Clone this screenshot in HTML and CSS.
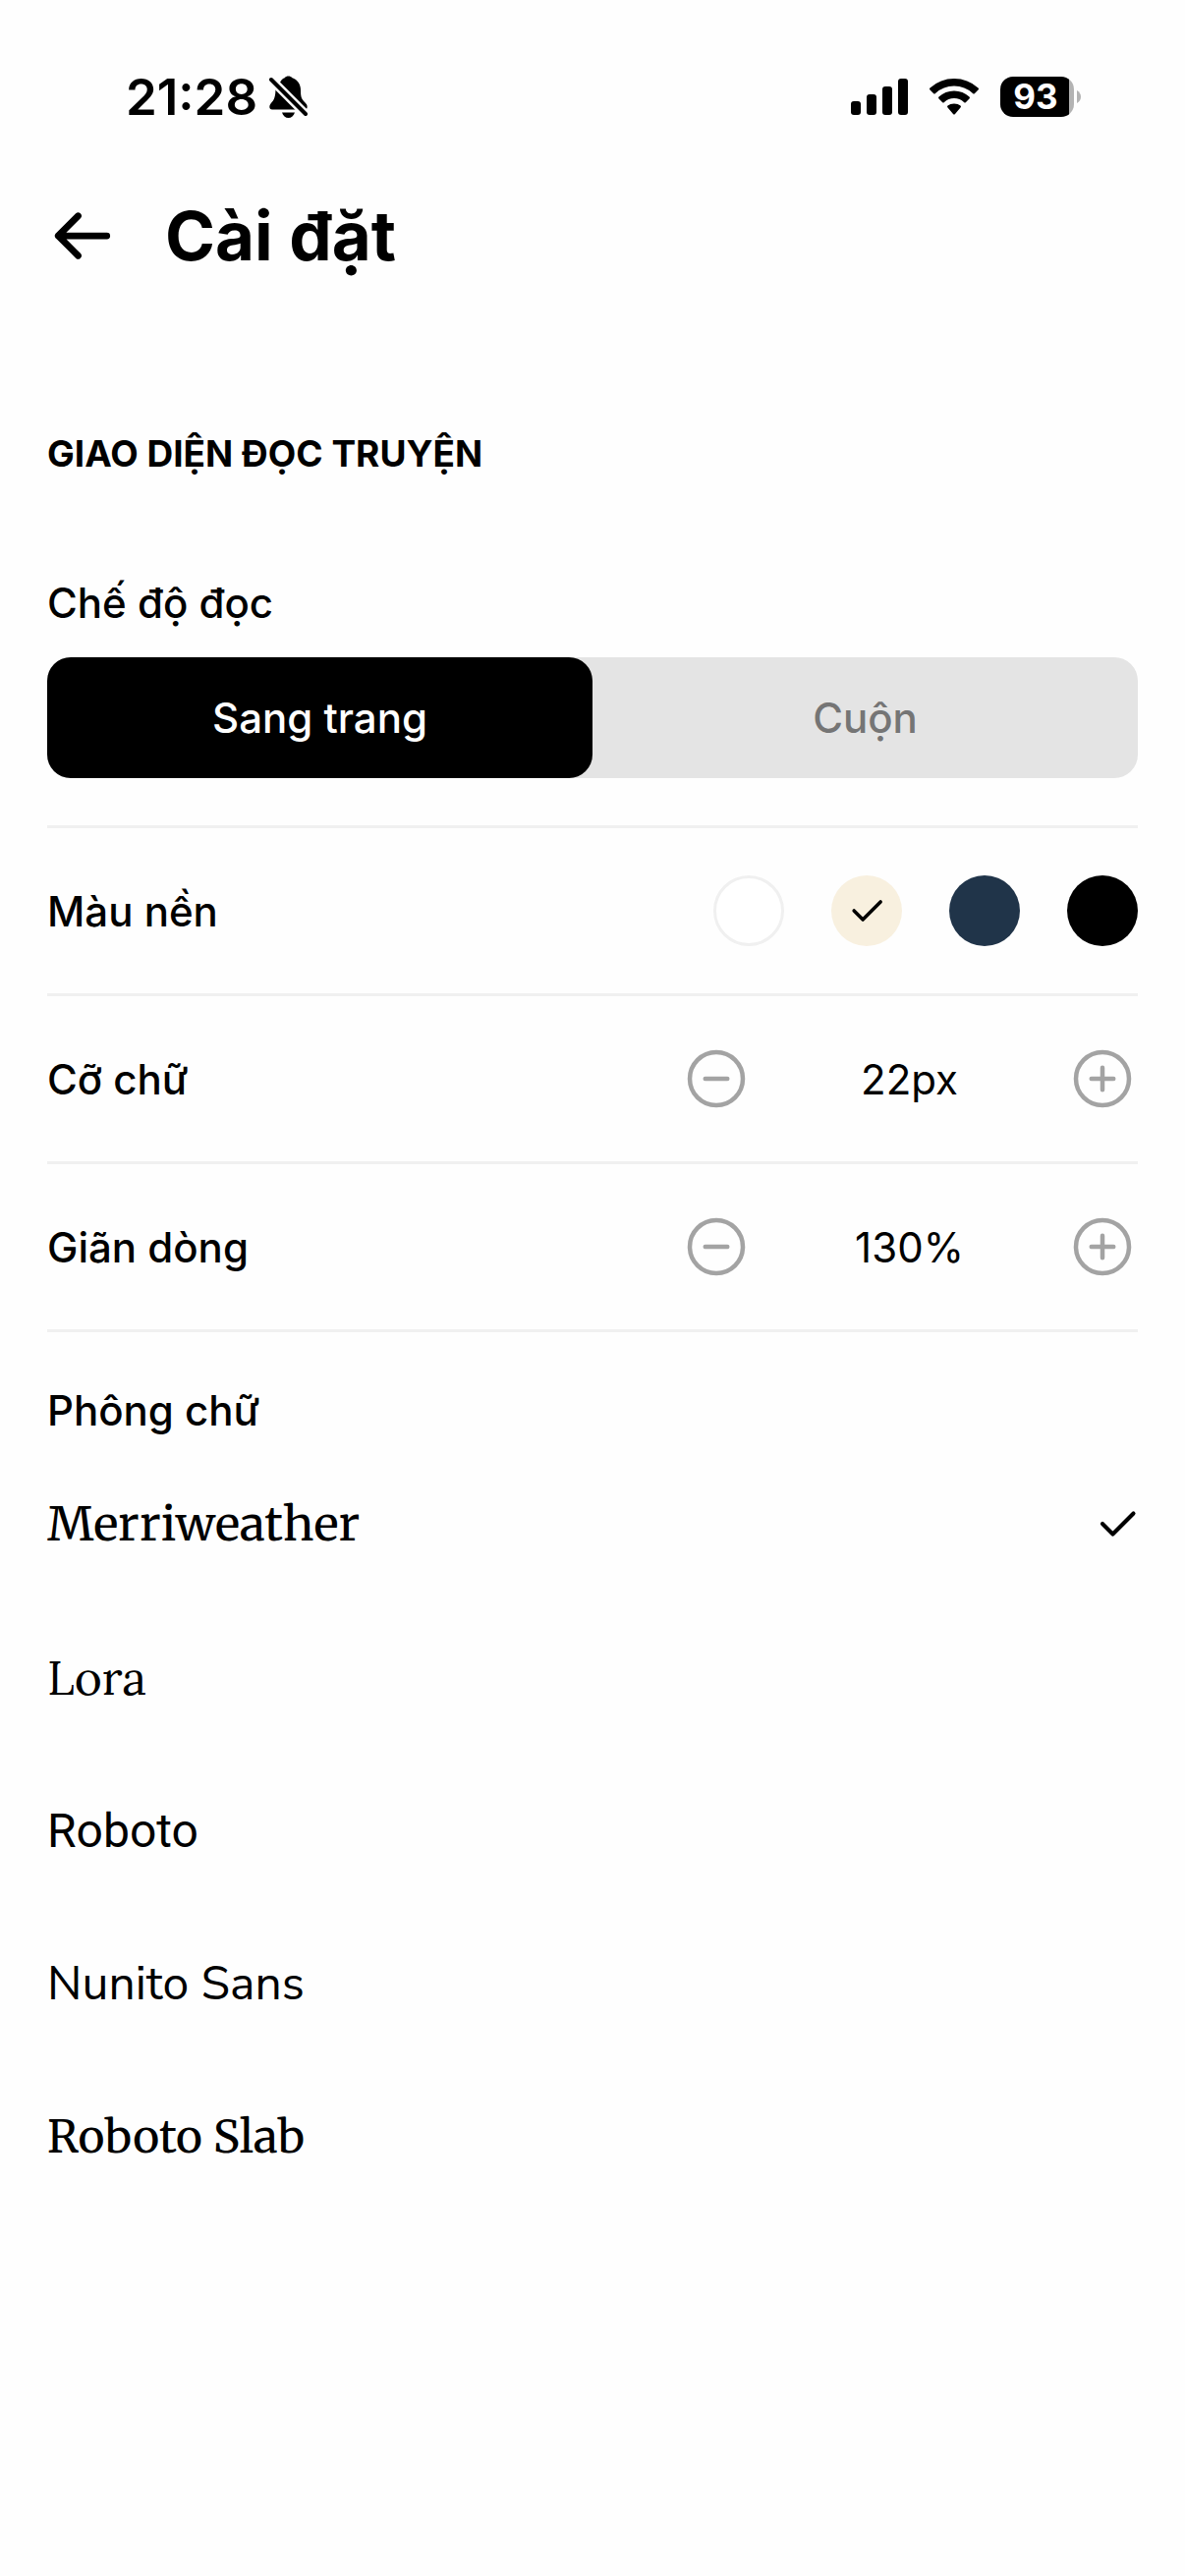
FILE: index.html
```
<!DOCTYPE html>
<html lang="vi">
<head>
    <meta charset="UTF-8">
    <meta name="viewport" content="width=device-width, initial-scale=1.0">
    <title>Cài đặt</title>
    <link rel="stylesheet" href="styles.css">
</head>
<body>
    <div class="status-bar">
        <div class="status-left">
            <span class="time">21:28</span>
            <svg class="bell" viewBox="0 0 39 43" aria-hidden="true">
                <path d="M10 9C12 4 14 3 16 2C17 0 22 0 23 2C29 4 32 9 32 15C32 22 33 24 37 28C39 30 39 32 38 34L34 32Z"/>
                <path d="M6.500 12L28 34.500H3C0 34.500 -0.500 31 1.500 28.500C5 24.500 6.500 22 6.500 12Z"/>
                <path d="M13 37.500H26C25 41 22.500 43 19.500 43C16.500 43 14 41 13 37.500Z"/>
                <path class="bell-gap" d="M1.500 3.500L37.500 39.500"/>
                <path class="bell-slash" d="M2 4L37 39"/>
            </svg>
        </div>
        <div class="status-right">
            <svg class="signal" viewBox="0 0 58 38" aria-hidden="true">
                <rect x="0" y="24" width="10" height="14" rx="3"/>
                <rect x="16" y="17" width="10" height="21" rx="3"/>
                <rect x="32" y="9" width="10" height="29" rx="3"/>
                <rect x="48" y="1" width="10" height="37" rx="3"/>
            </svg>
            <svg class="wifi" viewBox="0 0 50 38" aria-hidden="true">
                <path d="M0.500 10.500Q11 1 25 1Q39 1 49.500 10.500Q50.500 11.500 49.500 12.500L46 16Q45 17 44 16Q36 8.500 25 8.500Q14 8.500 6 16Q5 17 4 16L0.500 12.500Q-0.500 11.500 0.500 10.500Z"/>
                <path d="M9.500 19.500Q16 13.500 25 13.500Q34 13.500 40.500 19.500Q41.500 20.500 40.500 21.500L37 25Q36 26 35 25Q31 21 25 21Q19 21 15 25Q14 26 13 25L9.500 21.500Q8.500 20.500 9.500 19.500Z"/>
                <path d="M18.500 28.500Q21 26.500 25 26.500Q29 26.500 31.500 28.500Q32.500 29.500 31.500 30.500L26 37Q25 38 24 37L18.500 30.500Q17.500 29.500 18.500 28.500Z"/>
            </svg>
            <div class="battery">
                <span class="battery-level">93</span>
                <svg class="battery-nub" viewBox="0 0 4 13" aria-hidden="true">
                    <path d="M0 0Q4 2.500 4 6.500Q4 10.500 0 13Z"/>
                </svg>
            </div>
        </div>
    </div>

    <header class="header">
        <button class="icon-button" type="button" aria-label="Quay lại">
            <svg class="icon back" viewBox="0 0 256 256" aria-hidden="true">
                <path d="M216 128H40M112 56L40 128L112 200"/>
            </svg>
        </button>
        <h1>Cài đặt</h1>
    </header>

    <main class="content">
        <h2>GIAO DIỆN ĐỌC TRUYỆN</h2>

        <section class="mode">
            <h3 id="modeLabel">Chế độ đọc</h3>
            <div class="segments" role="radiogroup" aria-labelledby="modeLabel">
                <label class="segment"><input type="radio" name="mode" checked>Sang trang</label>
                <label class="segment"><input type="radio" name="mode">Cuộn</label>
            </div>
        </section>

        <section class="row">
            <h3 id="colorLabel">Màu nền</h3>
            <div class="swatches" role="radiogroup" aria-labelledby="colorLabel">
                <label class="swatch white">
                    <input type="radio" name="color" aria-label="Trắng">
                    <svg class="icon check" viewBox="16 16 224 224" aria-hidden="true"><path d="M216 72L104 184L48 128"/></svg>
                </label>
                <label class="swatch cream">
                    <input type="radio" name="color" aria-label="Kem" checked>
                    <svg class="icon check" viewBox="16 16 224 224" aria-hidden="true"><path d="M216 72L104 184L48 128"/></svg>
                </label>
                <label class="swatch navy">
                    <input type="radio" name="color" aria-label="Xanh đậm">
                    <svg class="icon check" viewBox="16 16 224 224" aria-hidden="true"><path d="M216 72L104 184L48 128"/></svg>
                </label>
                <label class="swatch black">
                    <input type="radio" name="color" aria-label="Đen">
                    <svg class="icon check" viewBox="16 16 224 224" aria-hidden="true"><path d="M216 72L104 184L48 128"/></svg>
                </label>
            </div>
        </section>

        <section class="row">
            <h3>Cỡ chữ</h3>
            <div class="stepper" data-step="1" data-unit="px">
                <button class="icon-button minus" type="button" aria-label="Giảm cỡ chữ">
                    <svg class="icon" viewBox="0 0 256 256" aria-hidden="true"><circle cx="128" cy="128" r="96"/><path d="M88 128H168"/></svg>
                </button>
                <output>22px</output>
                <button class="icon-button plus" type="button" aria-label="Tăng cỡ chữ">
                    <svg class="icon" viewBox="0 0 256 256" aria-hidden="true"><circle cx="128" cy="128" r="96"/><path d="M88 128H168M128 88V168"/></svg>
                </button>
            </div>
        </section>

        <section class="row">
            <h3>Giãn dòng</h3>
            <div class="stepper" data-step="10" data-unit="%">
                <button class="icon-button minus" type="button" aria-label="Giảm giãn dòng">
                    <svg class="icon" viewBox="0 0 256 256" aria-hidden="true"><circle cx="128" cy="128" r="96"/><path d="M88 128H168"/></svg>
                </button>
                <output>130%</output>
                <button class="icon-button plus" type="button" aria-label="Tăng giãn dòng">
                    <svg class="icon" viewBox="0 0 256 256" aria-hidden="true"><circle cx="128" cy="128" r="96"/><path d="M88 128H168M128 88V168"/></svg>
                </button>
            </div>
        </section>

        <section class="fonts">
            <h3 id="fontLabel">Phông chữ</h3>
            <div class="font-list" role="radiogroup" aria-labelledby="fontLabel">
                <label class="font merriweather">
                    <input type="radio" name="font" checked>Merriweather
                    <svg class="icon check" viewBox="16 16 224 224" aria-hidden="true"><path d="M216 72L104 184L48 128"/></svg>
                </label>
                <label class="font lora">
                    <input type="radio" name="font">Lora
                    <svg class="icon check" viewBox="16 16 224 224" aria-hidden="true"><path d="M216 72L104 184L48 128"/></svg>
                </label>
                <label class="font roboto">
                    <input type="radio" name="font">Roboto
                    <svg class="icon check" viewBox="16 16 224 224" aria-hidden="true"><path d="M216 72L104 184L48 128"/></svg>
                </label>
                <label class="font nunito">
                    <input type="radio" name="font">Nunito Sans
                    <svg class="icon check" viewBox="16 16 224 224" aria-hidden="true"><path d="M216 72L104 184L48 128"/></svg>
                </label>
                <label class="font roboto-slab">
                    <input type="radio" name="font">Roboto Slab
                    <svg class="icon check" viewBox="16 16 224 224" aria-hidden="true"><path d="M216 72L104 184L48 128"/></svg>
                </label>
            </div>
        </section>
    </main>

    <script>
        document.querySelectorAll('.stepper').forEach(function(stepper) {
            const output = stepper.querySelector('output');
            const step = Number(stepper.dataset.step);

            function change(delta) {
                output.textContent = parseInt(output.textContent, 10) + delta + stepper.dataset.unit;
            }
            stepper.querySelector('.minus').addEventListener('click', function() {
                change(-step);
            });
            stepper.querySelector('.plus').addEventListener('click', function() {
                change(step);
            });
        });
    </script>
</body>
</html>
```
FILE: styles.css
```
* {
    box-sizing: border-box;
}
body {
    margin: 0;
    font-family: Inter, "Liberation Sans", sans-serif;
    font-size: 42px;
    line-height: 63px;
    color: #000;
    background: #fefefe;
}
h1, h2, h3 {
    margin: 0;
}
h1 {
    font-size: 69px;
    line-height: 108px;
    font-weight: 700;
}
h2 {
    font-size: 37px;
    line-height: 48px;
    font-weight: 700;
}
h3 {
    font-size: 42px;
    font-weight: 500;
}

/* status bar */
.status-bar {
    display: flex;
    justify-content: space-between;
    align-items: center;
    height: 186px;
    padding: 10px 106px 0 128px;
}
.status-left {
    display: flex;
    align-items: center;
    gap: 12px;
}
.time {
    font-size: 51px;
    font-weight: 600;
}
.bell {
    width: 39px;
    height: 43px;
}
.bell-gap {
    stroke: #fefefe;
    stroke-width: 9;
}
.bell-slash {
    stroke: #000;
    stroke-width: 4;
    stroke-linecap: round;
}
.status-right {
    display: flex;
    align-items: center;
    gap: 22px;
}
.signal {
    width: 58px;
    height: 38px;
}
.wifi {
    width: 50px;
    height: 38px;
}
.battery {
    display: flex;
    align-items: center;
    gap: 3px;
}
.battery-level {
    width: 75px;
    height: 41px;
    padding-right: 3px;
    border-radius: 13px;
    background: linear-gradient(to right, #000 70px, #b3b3b3 70px);
    color: #fff;
    font-size: 35px;
    line-height: 41px;
    font-weight: 700;
    text-align: center;
}
.battery-nub {
    width: 4px;
    height: 13px;
    fill: #b3b3b3;
}

/* icons */
.icon {
    display: block;
    width: 72px;
    height: 72px;
    fill: none;
    stroke: currentColor;
    stroke-width: 16;
    stroke-linecap: round;
    stroke-linejoin: round;
}
.icon.back {
    stroke-width: 24;
}
.icon.check {
    width: 42px;
    height: 42px;
    stroke-width: 22;
    visibility: hidden;
}
input:checked ~ .check {
    visibility: visible;
}
.icon-button {
    padding: 0;
    border: none;
    background: none;
    color: inherit;
    cursor: pointer;
}
input[type="radio"] {
    position: absolute;
    opacity: 0;
    margin: 0;
}

.header {
    display: flex;
    align-items: center;
    gap: 48px;
    padding: 0 48px;
}
.content {
    padding: 144px 48px 48px;
}

/* reading mode */
.mode {
    margin-top: 96px;
    padding-bottom: 48px;
}
.segments {
    display: flex;
    margin-top: 24px;
    border-radius: 24px;
    background: #e4e4e4;
}
.segment {
    flex: 1;
    padding: 30px;
    border-radius: 24px;
    font-weight: 500;
    text-align: center;
    color: #757575;
    cursor: pointer;
}
.segment:has(input:checked) {
    background: #000;
    color: #fff;
}

.row {
    display: flex;
    justify-content: space-between;
    align-items: center;
    padding: 48px 0;
    border-top: 3px solid #f0f0f0;
}
.swatches {
    display: flex;
    gap: 48px;
}
.swatch {
    display: flex;
    justify-content: center;
    align-items: center;
    width: 72px;
    height: 72px;
    border-radius: 50%;
    cursor: pointer;
}
.swatch .check {
    width: 36px;
    height: 36px;
}
.white {
    background: #fff;
    border: 3px solid #f0f0f0;
}
.cream {
    background: #f8f0df;
}
.navy {
    background: #203449;
    color: #fff;
}
.black {
    background: #000;
    color: #fff;
}
.stepper {
    display: flex;
    align-items: center;
    width: 465px;
}
.stepper output {
    flex: 1;
    text-align: center;
}
.stepper .icon-button {
    color: #a3a3a3;
}

/* font list */
.fonts {
    padding-top: 48px;
    border-top: 3px solid #f0f0f0;
}
.font-list {
    margin-top: 6px;
}
.font {
    display: flex;
    justify-content: space-between;
    align-items: center;
    height: 156px;
    font-size: 48px;
    cursor: pointer;
}
.merriweather {
    font-family: Merriweather, "DejaVu Serif", serif;
}
.lora {
    font-family: Lora, "Liberation Serif", serif;
}
.roboto {
    font-family: Roboto, sans-serif;
}
.nunito {
    font-family: "Nunito Sans", "Open Sans", sans-serif;
}
.roboto-slab {
    font-family: "Roboto Slab", Merriweather, "DejaVu Serif", serif;
    font-size: 46px;
}
```
